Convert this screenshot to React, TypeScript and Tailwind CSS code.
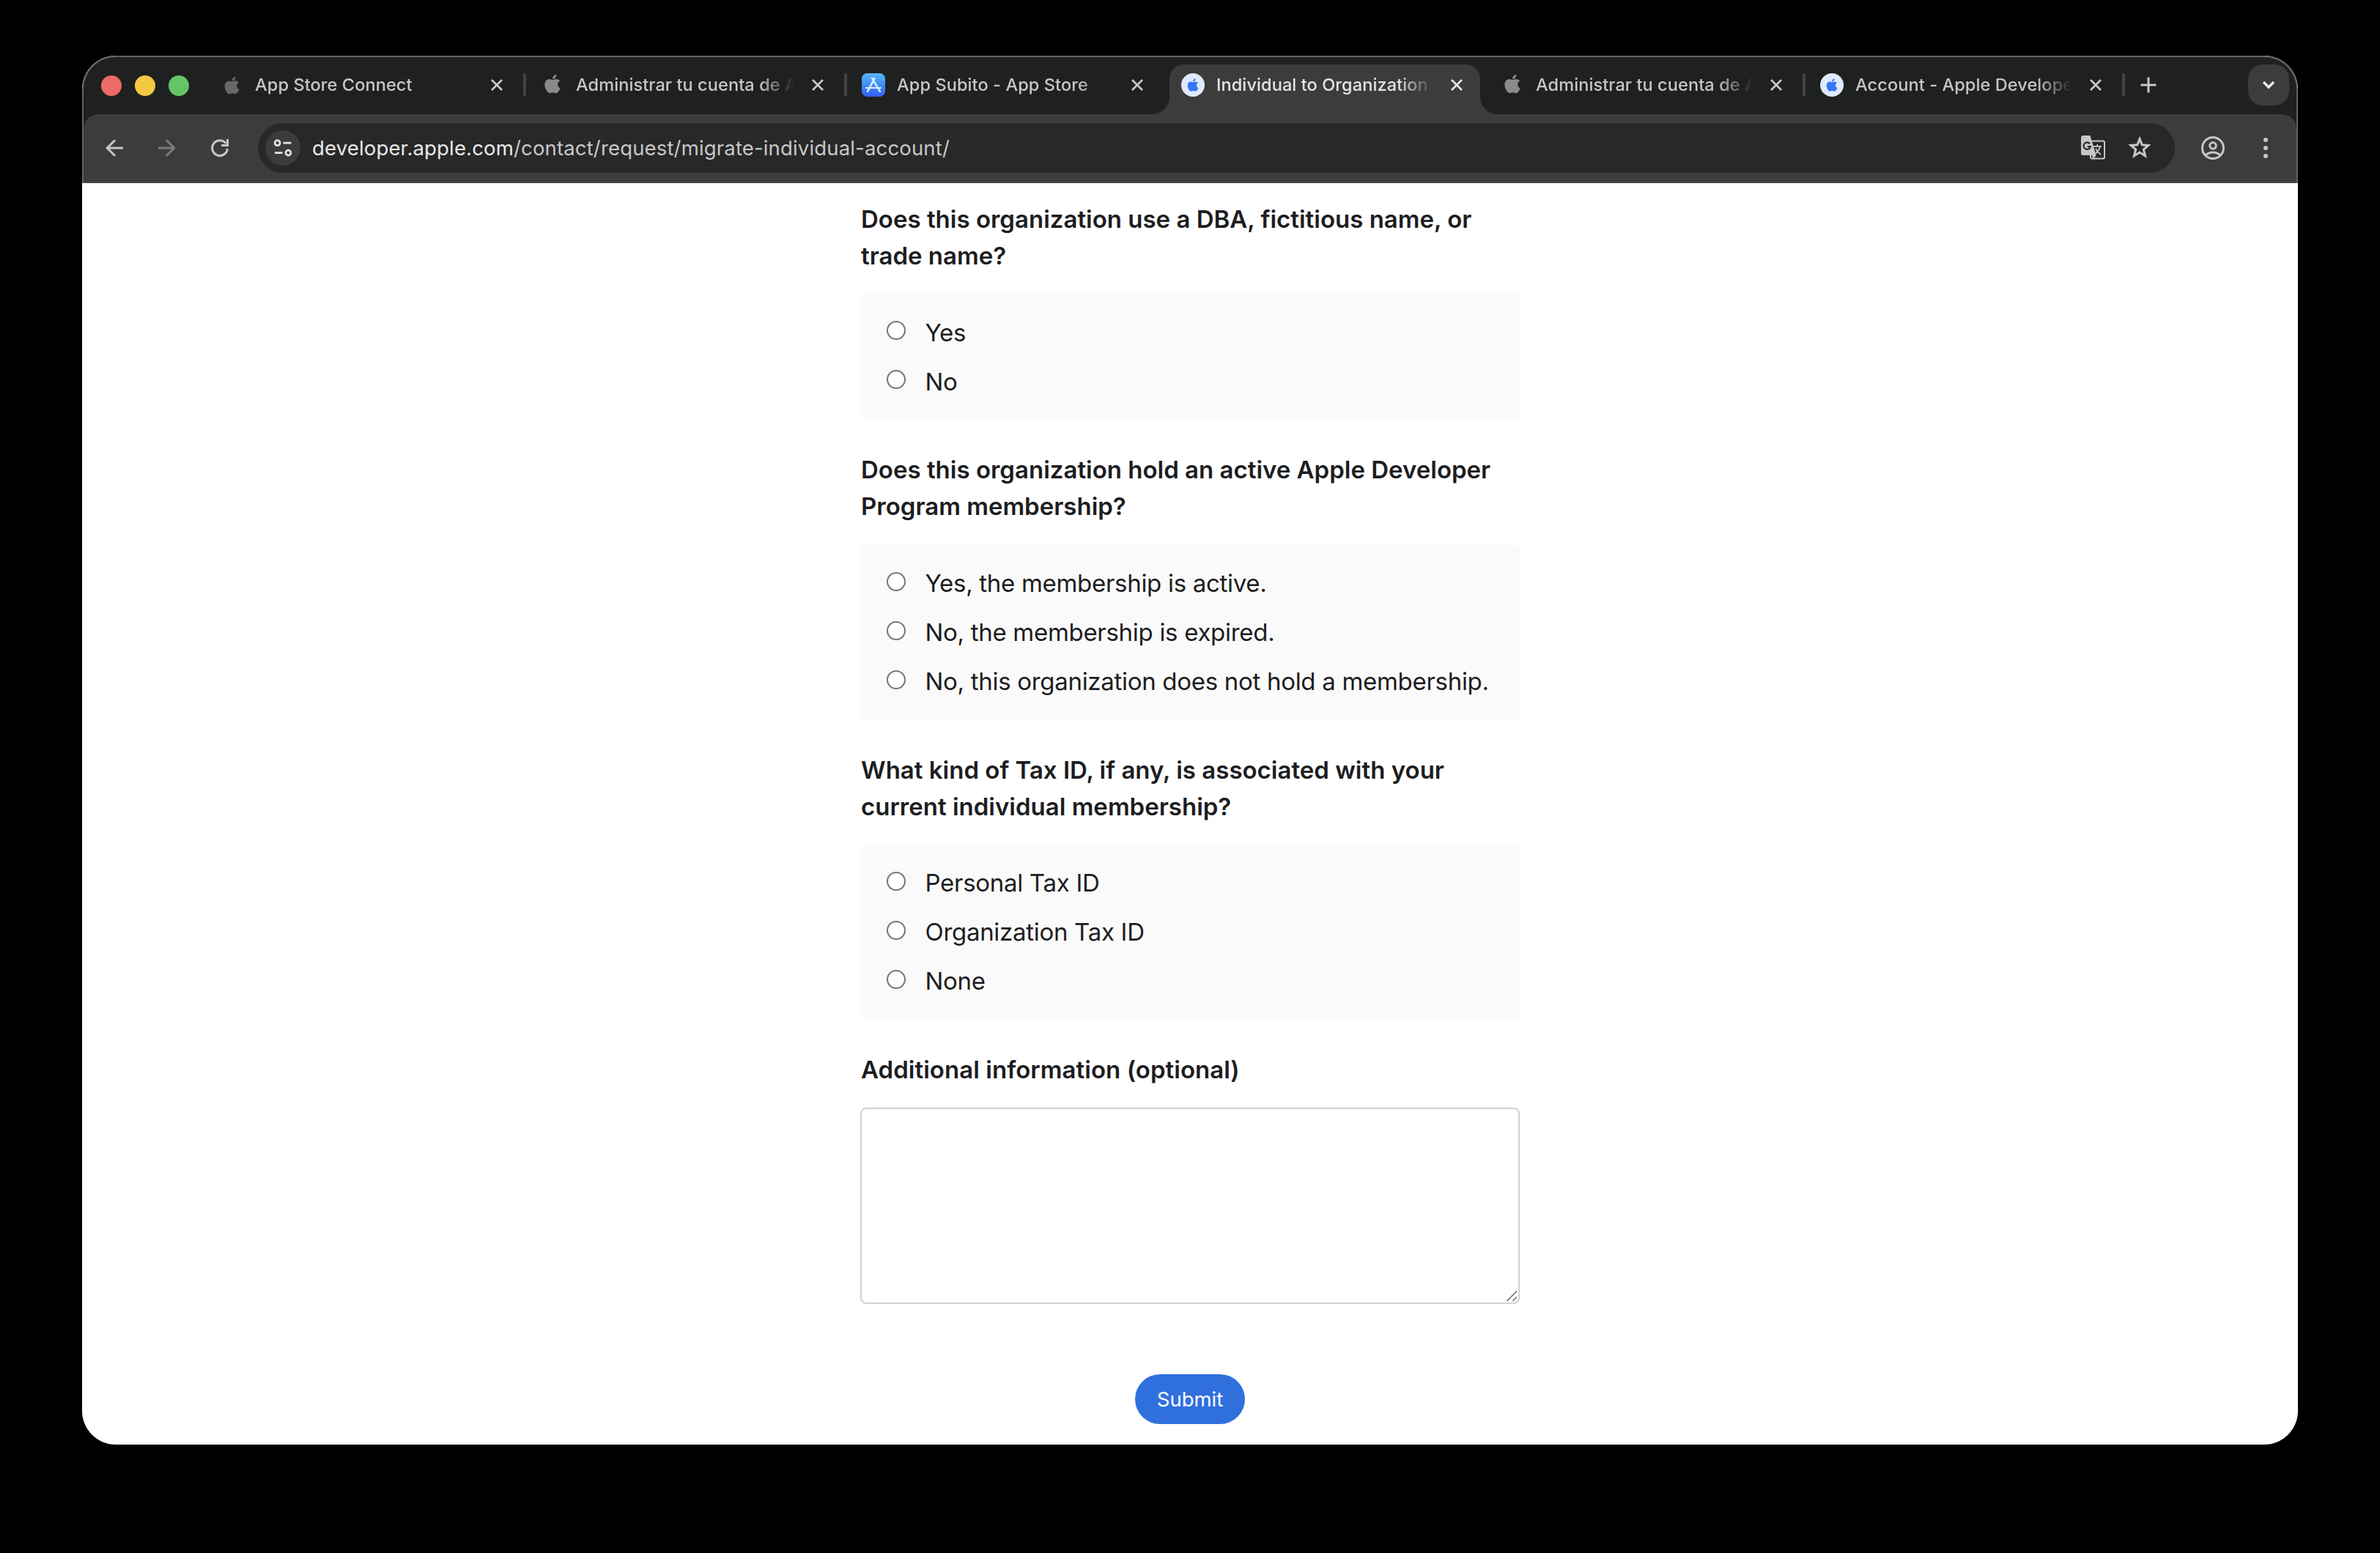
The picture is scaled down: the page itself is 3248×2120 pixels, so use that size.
import { useState } from 'react';
import type { ReactNode } from 'react';
import { FaApple } from 'react-icons/fa';
import clsx from 'clsx';

type TabIcon = 'apple-dim' | 'apple' | 'store' | 'developer';

interface Tab {
  title: string;
  icon: TabIcon;
  width: string;
  active?: boolean;
  divider?: boolean;
}

const TABS: Tab[] = [
  { title: 'App Store Connect', icon: 'apple-dim', width: 'w-[438px]', divider: true },
  { title: 'Administrar tu cuenta de Apple', icon: 'apple', width: 'w-[438px]', divider: true },
  { title: 'App Subito - App Store', icon: 'store', width: 'w-[436px]' },
  { title: 'Individual to Organization', icon: 'developer', width: 'w-[436px]', active: true },
  { title: 'Administrar tu cuenta de Apple', icon: 'apple', width: 'w-[436px]', divider: true },
  { title: 'Account - Apple Developer', icon: 'developer', width: 'w-[436px]', divider: true },
];

const QUESTIONS = [
  {
    id: 'dba',
    title: ['Does this organization use a DBA, fictitious name, or', 'trade name?'],
    options: ['Yes', 'No'],
  },
  {
    id: 'membership',
    title: ['Does this organization hold an active Apple Developer', 'Program membership?'],
    options: [
      'Yes, the membership is active.',
      'No, the membership is expired.',
      'No, this organization does not hold a membership.',
    ],
  },
  {
    id: 'tax',
    title: ['What kind of Tax ID, if any, is associated with your', 'current individual membership?'],
    options: ['Personal Tax ID', 'Organization Tax ID', 'None'],
  },
];

function AppStoreIcon() {
  return (
    <svg viewBox="0 0 32 32" className="w-8 h-8">
      <defs>
        <linearGradient id="store" x1="0" y1="0" x2="0" y2="1">
          <stop offset="0" stopColor="#56b9f8" />
          <stop offset="1" stopColor="#2f5ff0" />
        </linearGradient>
      </defs>
      <rect width="32" height="32" rx="7.5" fill="url(#store)" />
      <g stroke="#d9edff" strokeWidth="2.5" strokeLinecap="round" fill="none">
        <path d="M17.6 6.8 8 24.8" />
        <path d="M14.2 6.8 25 24.8" />
        <path d="M6 20H26" strokeWidth="2.2" />
      </g>
    </svg>
  );
}

function Favicon({ icon }: { icon: TabIcon }) {
  if (icon === 'store') return <AppStoreIcon />;
  if (icon === 'developer') {
    return (
      <span className="w-8 h-8 rounded-full bg-[#dfeafd] flex items-center justify-center">
        <FaApple className="w-5 h-5 text-[#3478f6] -mt-px" />
      </span>
    );
  }
  return (
    <span className="w-8 h-8 flex items-center justify-center">
      <FaApple
        className={clsx(
          icon === 'apple' ? 'w-7 h-[29px] text-[#8a8a8a] -mt-1' : 'w-[27px] h-[27px] text-[#686868]',
        )}
      />
    </span>
  );
}

function CloseIcon({ active }: { active?: boolean }) {
  return (
    <svg viewBox="0 0 24 24" className={clsx('w-6 h-6', active ? 'text-[#e3e3e3]' : 'text-[#c7c7c7]')}>
      <path d="M5 5 19 19M19 5 5 19" stroke="currentColor" strokeWidth="2.8" />
    </svg>
  );
}

function TabItem({ tab }: { tab: Tab }) {
  return (
    <div className={clsx('relative h-[76px] flex items-center pl-4 shrink-0', tab.width)}>
      {tab.active && (
        <>
          <div className="absolute left-0 top-[10px] -bottom-0.5 w-[424px] rounded-t-[20px] bg-[#3c3c3c]" />
          <div className="absolute -left-[24px] -bottom-0.5 w-6 h-6 bg-[radial-gradient(circle_at_0_0,transparent_23.5px,#3c3c3c_24.5px)]" />
          <div className="absolute left-[424px] -bottom-0.5 w-6 h-6 bg-[radial-gradient(circle_at_100%_0,transparent_23.5px,#3c3c3c_24.5px)]" />
        </>
      )}
      <div className="relative flex items-center flex-1 min-w-0">
        <Favicon icon={tab.icon} />
        <span
          className={clsx(
            'ml-4 mr-4 flex-1 min-w-0 overflow-hidden whitespace-nowrap text-[23.5px] tracking-[0.1px] leading-8 font-medium [mask-image:linear-gradient(to_right,#000_calc(100%-52px),transparent_calc(100%-4px))]',
            tab.active ? 'text-[#e3e3e3]' : 'text-[#c7c7c7]',
          )}
        >
          {tab.title}
        </span>
        <CloseIcon active={tab.active} />
      </div>
      <div className={clsx('ml-6 mr-1 w-1 h-8 rounded-full', tab.divider && 'bg-[#414342]')} />
    </div>
  );
}

function TabStrip() {
  return (
    <div className="h-[78px] pb-0.5 pl-6 pr-[10px] flex items-center">
      <div className="flex gap-[18px] mt-0.5">
        <span className="w-7 h-7 rounded-full bg-[#ee6a66]" />
        <span className="w-7 h-7 rounded-full bg-[#f4c841]" />
        <span className="w-7 h-7 rounded-full bg-[#66c466]" />
      </div>
      <div className="flex ml-[26px]">
        {TABS.map((tab, i) => (
          <TabItem key={i} tab={tab} />
        ))}
      </div>
      <svg viewBox="0 0 24 24" className="w-6 h-6 ml-4">
        <path d="M12 1.5V22.5M1.5 12H22.5" stroke="#c7c7c7" strokeWidth="3" />
      </svg>
      <button className="ml-auto w-14 h-14 rounded-[20px] bg-[#3c3c3c] flex items-center justify-center">
        <svg viewBox="0 0 20 20" className="w-5 h-5">
          <path d="M3 6 10 13 17 6" fill="none" stroke="#e8e8e8" strokeWidth="3.4" />
        </svg>
      </button>
    </div>
  );
}

function ToolIcon({ children, className }: { children: ReactNode; className?: string }) {
  return (
    <svg
      viewBox="0 0 24 24"
      className={clsx('w-6 h-6 shrink-0 overflow-visible', className)}
      fill="none"
      stroke="currentColor"
      strokeWidth="3"
    >
      {children}
    </svg>
  );
}

function TranslateIcon() {
  return (
    <svg viewBox="0 0 33 33" className="w-[33px] h-[33px] shrink-0 -mt-px">
      <rect x="13" y="7.5" width="19" height="24" rx="2" fill="none" stroke="#c7c7c7" strokeWidth="2" />
      <path d="M3 0H12.5L20.5 27L17 32L15 27H3A3 3 0 0 1 0 24V3A3 3 0 0 1 3 0Z" fill="#c7c7c7" />
      <path
        d="M12 11.2A4.7 4.7 0 1 0 12.9 15H8.8"
        fill="none"
        stroke="#282828"
        strokeWidth="2.2"
      />
      <path
        d="M17 14.8H28M22.2 12V14.8M26 15C24.8 19 22.5 22.5 19.4 25M20 18C21.6 21.4 24 24 27.2 26"
        fill="none"
        stroke="#c7c7c7"
        strokeWidth="1.8"
      />
    </svg>
  );
}

function Toolbar() {
  return (
    <div className="h-[94px] rounded-t-[20px] bg-[#3c3c3c] border-b-2 border-[#464646] pl-[30px] flex items-center text-[#c7c7c7]">
      <ToolIcon>
        <path d="M24 12H2M13 1.2 2.2 12 13 22.8" />
      </ToolIcon>
      <ToolIcon className="ml-12 text-[#7c7c7c]">
        <path d="M0 12H22M11 1.2 21.8 12 11 22.8" />
      </ToolIcon>
      <ToolIcon className="ml-12">
        <path d="M22.4 13A10.4 10.4 0 1 1 20.2 5.6" />
        <path d="M22.5 0V8.4H14" />
      </ToolIcon>

      <div className="ml-10 w-[2616px] h-[68px] rounded-full bg-[#282828] flex items-center pl-[10px] pr-[33px]">
        <span className="w-12 h-12 rounded-full bg-[#3c3c3c] flex items-center justify-center text-[#e3e3e3]">
          <ToolIcon>
            <circle cx="4.6" cy="5.2" r="3.5" strokeWidth="2.7" />
            <circle cx="19.4" cy="18.6" r="3.5" strokeWidth="2.7" />
            <path d="M12.5 5.2H23.5M1 18.6H11.5" strokeWidth="2.8" />
          </ToolIcon>
        </span>
        <span className="ml-4 flex-1 text-[27.5px] tracking-[0.16px] leading-9 whitespace-nowrap">
          <span className="text-[#e8e8e8]">developer.apple.com</span>/contact/request/migrate-individual-account/
        </span>
        <TranslateIcon />
        <svg viewBox="0 0 30 30" className="w-[30px] h-[30px] ml-8 shrink-0 -mt-0.5">
          <path
            d="M15 3.8 18 11.2 26 11.8 19.9 17 21.9 25 15 20.7 8.1 25 10.1 17 4 11.8 12 11.2Z"
            transform="translate(-1.3 -.5) scale(1.09)"
            fill="none"
            stroke="#c7c7c7"
            strokeWidth="2.8"
          />
        </svg>
      </div>

      <svg viewBox="0 0 32 32" className="w-8 h-8 ml-9 shrink-0" fill="none" stroke="currentColor" strokeWidth="3">
        <circle cx="16" cy="16" r="14.5" />
        <circle cx="16" cy="12.8" r="4.3" />
        <path d="M6 26C11 20.6 21 20.6 26 26" />
      </svg>
      <div className="ml-[53px] flex flex-col gap-[5px]">
        <span className="w-1.5 h-1.5 rounded-full bg-[#c7c7c7]" />
        <span className="w-1.5 h-1.5 rounded-full bg-[#c7c7c7]" />
        <span className="w-1.5 h-1.5 rounded-full bg-[#c7c7c7]" />
      </div>
    </div>
  );
}

export default function App() {
  const [answers, setAnswers] = useState<Record<string, string>>({});
  const [info, setInfo] = useState('');

  return (
    <div className="w-[3248px] h-[2120px] bg-black px-28 pt-[76px] overflow-hidden font-['Inter',sans-serif]">
      <div className="h-[1896px] rounded-[46px] overflow-hidden bg-white flex flex-col">
        <header className="border-2 border-b-0 border-[#626262] rounded-t-[46px] bg-[#1f2120] overflow-hidden shrink-0">
          <TabStrip />
          <Toolbar />
        </header>

        <main className="w-[900px] mx-auto pt-[23.8px] flex flex-col text-[33px] text-[#1d1d1f]">
          {QUESTIONS.map((q) => (
            <section key={q.id} className="mb-[42.3px]">
              <h2 className="pl-px font-semibold leading-[50px] whitespace-nowrap">
                {q.title[0]}
                <br />
                {q.title[1]}
              </h2>
              <div className="mt-[27.6px] rounded-lg bg-[#fafafa] pl-9 pt-[16.5px] pb-[22px]">
                {q.options.map((option) => (
                  <label key={option} className="h-[67px] flex items-center tracking-[-0.3px] whitespace-nowrap">
                    <input
                      type="radio"
                      name={q.id}
                      checked={answers[q.id] === option}
                      onChange={() => setAnswers({ ...answers, [q.id]: option })}
                      className="appearance-none w-[26px] h-[26px] rounded-full border-2 border-[#767676] bg-white checked:border-8 checked:border-[#0075ff]"
                    />
                    <span className="ml-[26.5px] mt-1.5">{option}</span>
                  </label>
                ))}
              </div>
            </section>
          ))}

          <label htmlFor="info" className="pl-px font-semibold leading-[50px] tracking-[0.04px]">
            Additional information (optional)
          </label>
          <div className="relative mt-[27px] h-[268px]">
            <textarea
              id="info"
              value={info}
              onChange={(e) => setInfo(e.target.value)}
              className="block w-full h-full resize-none rounded-lg border-2 border-[#d2d2d2] bg-white p-4 outline-none"
            />
            <svg viewBox="0 0 16 16" className="absolute right-[3px] bottom-[3px] w-4 h-4">
              <path d="M1.5 15 15 1.5M9.5 15 15 9.5" stroke="#6e6e6e" strokeWidth="1.6" />
            </svg>
          </div>

          <button className="self-center mt-24 w-[150px] h-[68px] pt-0.5 rounded-full bg-[#3070dd] text-white text-[27.5px]">
            Submit
          </button>
        </main>
      </div>
    </div>
  );
}
